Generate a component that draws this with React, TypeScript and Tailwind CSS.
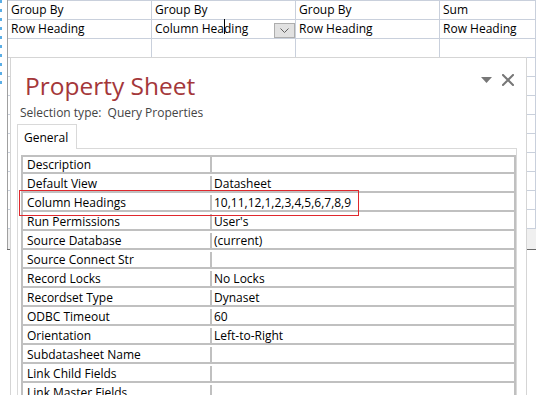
const gridRows: string[][] = [
  ["Group By", "Group By", "Group By", "Sum"],
  ["Row Heading", "Column Heading", "Row Heading", "Row Heading"],
];

const properties: [string, string][] = [
  ["Description", ""],
  ["Default View", "Datasheet"],
  ["Column Headings", "10,11,12,1,2,3,4,5,6,7,8,9"],
  ["Run Permissions", "User's"],
  ["Source Database", "(current)"],
  ["Source Connect Str", ""],
  ["Record Locks", "No Locks"],
  ["Recordset Type", "Dynaset"],
  ["ODBC Timeout", "60"],
  ["Orientation", "Left-to-Right"],
  ["Subdatasheet Name", ""],
  ["Link Child Fields", ""],
  ["Link Master Fields", ""],
];

const colWidths = ["w-[144px]", "w-[144px]", "w-[144px]", "w-[96px]"];

function Chevron() {
  return (
    <svg width="9" height="5" viewBox="0 0 9 5" fill="none">
      <path d="M0.5 0.5 L4.5 4.5 L8.5 0.5" stroke="#606060" strokeWidth="1" />
    </svg>
  );
}

function ColumnHeadingCell() {
  return (
    <div className="relative flex h-full items-center pl-[3px]">
      <span>
        Column Hea
        <span className="relative">
          <span className="absolute left-0 top-[-1px] h-[15px] w-px bg-black" />
        </span>
        ding
      </span>
      <div className="absolute right-0 top-[3px] flex h-[15px] w-[21px] items-center justify-center border border-[#adadad] bg-[#e1e1e1]">
        <Chevron />
      </div>
    </div>
  );
}

function QueryGrid() {
  return (
    <div className="flex">
      <div className="flex w-[7px] shrink-0">
        <div className="h-[90px] w-[2px] bg-[repeating-linear-gradient(to_bottom,#5aaee6_0px,#5aaee6_3px,transparent_3px,transparent_9px)]" />
      </div>
      <div className="flex flex-col">
        <div className="flex border-l border-[#a0a0a0]">
          <div className="flex flex-col border-t border-[#c9d0dc]">
            {Array.from({ length: 12 }).map((_, r) => (
              <div key={r} className="flex h-[19px] border-b border-[#c9d0dc]">
                {colWidths.map((w, c) => (
                  <div key={c} className={`${w} h-full border-r border-[#c9d0dc]`}>
                    {r === 1 && c === 1 ? (
                      <ColumnHeadingCell />
                    ) : (
                      <div className="flex h-full items-center pl-[3px]">{gridRows[r]?.[c] ?? ""}</div>
                    )}
                  </div>
                ))}
              </div>
            ))}
          </div>
        </div>
        <div className="h-[20px] border-l border-[#a0a0a0] bg-[#f0f0f0]" />
        <div className="h-px bg-[#6a6a6a]" />
      </div>
    </div>
  );
}

function PropertySheet() {
  return (
    <div className="absolute left-[10px] top-[57px] flex h-[350px] w-[517px] flex-col border border-[#d5d5d5] bg-white">
      <div className="flex h-[44px] items-start">
        <div className="pl-[14px] pt-[14px] text-[24.5px] leading-[28px] text-[#a4373a]">Property Sheet</div>
        <div className="ml-auto flex items-center gap-[10px] pr-[12px] pt-[16px]">
          <svg width="11" height="6" viewBox="0 0 11 6">
            <path d="M0 0 H11 L5.5 6 Z" fill="#777" />
          </svg>
          <svg width="12" height="12" viewBox="0 0 12 12">
            <path d="M1 1 L11 11 M11 1 L1 11" stroke="#777" strokeWidth="2" strokeLinecap="square" />
          </svg>
        </div>
      </div>
      <div className="h-[22px] pl-[9px] pt-[3px] leading-[16px] text-[#444]">Selection type:&nbsp; Query Properties</div>
      <div className="flex pl-[6px]">
        <div className="relative z-10 -mb-px h-[25px] w-[60px] border border-b-0 border-[#d9d9d9] bg-white pl-[6px] pt-[5px] leading-[16px]">
          General
        </div>
      </div>
      <div className="ml-[6px] mr-[9px] flex-1 border border-b-0 border-[#d9d9d9] pl-[3px] pt-[6px]">
        <div className="relative border-2 border-b-0 border-[#c0c0c0]">
          {properties.map(([label, value], i) => (
            <div
              key={label}
              className={`flex border-b-2 border-[#c0c0c0] leading-[16px] ${i === 0 ? "h-[17px]" : "h-[19px] pt-[2px]"}`}
            >
              <div className="w-[189px] border-r-2 border-[#c0c0c0] pl-[4px]">{label}</div>
              <div className="flex-1 pl-[2px]">{value}</div>
            </div>
          ))}
          <div className="absolute left-[-4px] top-[33px] h-[26px] w-[340px] border border-[#e0282d]" />
        </div>
      </div>
    </div>
  );
}

export default function App() {
  return (
    <div className="relative h-[395px] w-[536px] overflow-hidden bg-white font-['Open_Sans',sans-serif] text-[12px] text-black">
      <QueryGrid />
      <PropertySheet />
    </div>
  );
}
